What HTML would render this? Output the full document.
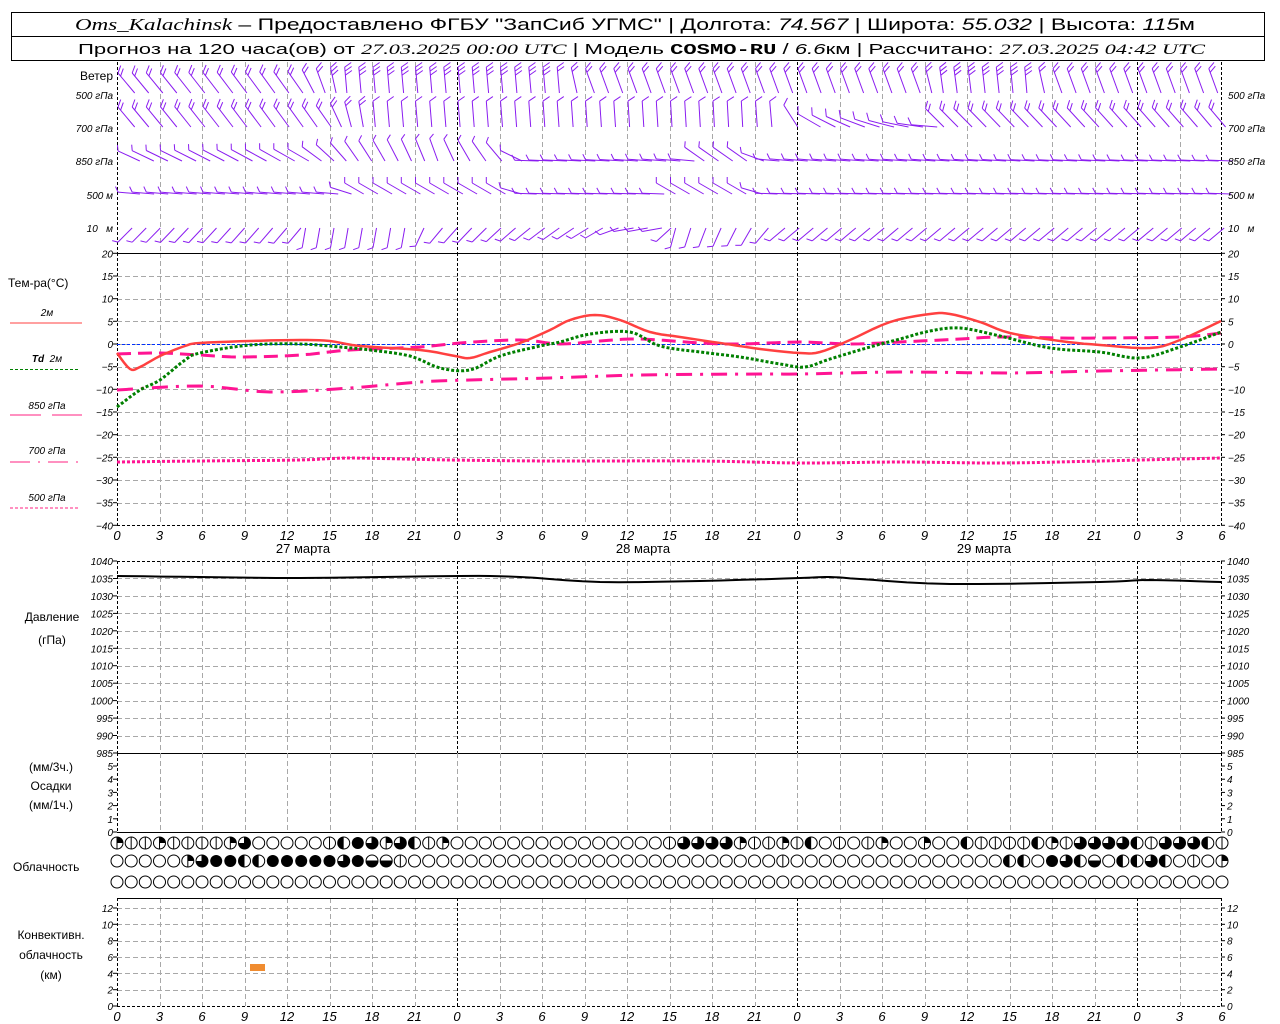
<!DOCTYPE html>
<html><head><meta charset="utf-8"><style>
html,body{margin:0;padding:0;background:#fff;width:1280px;height:1024px;overflow:hidden}
svg{display:block}
text{font-family:"Liberation Sans",sans-serif;fill:#000}
.it{font-style:italic}
.ax{font-size:10px;font-style:italic}
.lb{font-size:12px}
</style></head><body>
<svg id="s" width="1280" height="1024" viewBox="0 0 1280 1024" xmlns="http://www.w3.org/2000/svg">
<rect x="11.5" y="12.5" width="1253" height="48" fill="none" stroke="#000"/>
<line x1="11" y1="36.5" x2="1265" y2="36.5" stroke="#000"/>
<text x="75" y="30" font-size="17" textLength="1120" lengthAdjust="spacingAndGlyphs"><tspan font-family="Liberation Serif" font-style="italic">Oms_Kalachinsk</tspan> – Предоставлено ФГБУ "ЗапСиб УГМС" | Долгота: <tspan font-style="italic">74.567</tspan> | Широта: <tspan font-style="italic">55.032</tspan> | Высота: <tspan font-style="italic">115</tspan>м</text>
<text x="78" y="54" font-size="15" textLength="1127" lengthAdjust="spacingAndGlyphs">Прогноз на 120 часа(ов) от <tspan font-family="Liberation Serif" font-style="italic">27.03.2025 00:00 UTC</tspan> | Модель <tspan font-family="Liberation Mono" font-weight="bold">COSMO-RU</tspan> / <tspan font-style="italic">6.6</tspan>км | Рассчитано: <tspan font-family="Liberation Serif" font-style="italic">27.03.2025 04:42 UTC</tspan></text>

<g id="dyn"></g>

<text x="113" y="80" font-size="12" text-anchor="end">Ветер</text>
<text x="113" y="99" class="ax" text-anchor="end">500 гПа</text>
<text x="113" y="132" class="ax" text-anchor="end">700 гПа</text>
<text x="113" y="165" class="ax" text-anchor="end">850 гПа</text>
<text x="113" y="199" class="ax" text-anchor="end">500 м</text>
<text x="113" y="232" class="ax" text-anchor="end">10&#160;&#160;&#160;м</text>
<text x="1228" y="99" class="ax">500 гПа</text>
<text x="1228" y="132" class="ax">700 гПа</text>
<text x="1228" y="165" class="ax">850 гПа</text>
<text x="1228" y="199" class="ax">500 м</text>
<text x="1228" y="232" class="ax">10&#160;&#160;&#160;м</text>

<text x="8" y="287" class="lb">Тем-ра(°С)</text>
<text x="47" y="316" class="ax" text-anchor="middle">2м</text>
<line x1="10" y1="323" x2="82" y2="323" stroke="#ff4040" stroke-width="1"/>
<text x="47" y="362" class="ax" text-anchor="middle"><tspan font-weight="bold">Td</tspan>&#160;&#160;2м</text>
<line x1="10" y1="369.5" x2="78" y2="369.5" stroke="#008000" stroke-dasharray="3,2"/>
<text x="47" y="409" class="ax" text-anchor="middle">850 гПа</text>
<line x1="10" y1="415" x2="41" y2="415" stroke="#ff2080"/><line x1="52" y1="415" x2="82" y2="415" stroke="#ff2080"/>
<text x="47" y="454" class="ax" text-anchor="middle">700 гПа</text>
<line x1="10" y1="462" x2="78" y2="462" stroke="#ff2080" stroke-dasharray="20,8,2,8"/>
<text x="47" y="501" class="ax" text-anchor="middle">500 гПа</text>
<line x1="10" y1="508" x2="78" y2="508" stroke="#ff2080" stroke-dasharray="3,2"/>

<text x="303" y="553" font-size="13" text-anchor="middle">27 марта</text>
<text x="643" y="553" font-size="13" text-anchor="middle">28 марта</text>
<text x="984" y="553" font-size="13" text-anchor="middle">29 марта</text>

<text x="52" y="621" class="lb" text-anchor="middle">Давление</text>
<text x="52" y="644" class="lb" text-anchor="middle">(гПа)</text>
<text x="51" y="771" class="lb" text-anchor="middle">(мм/3ч.)</text>
<text x="51" y="790" class="lb" text-anchor="middle">Осадки</text>
<text x="51" y="809" class="lb" text-anchor="middle">(мм/1ч.)</text>
<text x="13" y="871" class="lb">Облачность</text>
<text x="51" y="939" class="lb" text-anchor="middle">Конвективн.</text>
<text x="51" y="959" class="lb" text-anchor="middle">облачность</text>
<text x="51" y="979" class="lb" text-anchor="middle">(км)</text>
<rect x="250" y="964" width="15" height="7" fill="#f08c30"/>
<g id="txt"></g>
</svg>
<script>
(function(){
var X0=117,PH=340/24,XR=1221;
function X(h){return X0+h*PH;}
var o=[];
function L(x1,y1,x2,y2,st){o.push('<line x1="'+x1.toFixed(1)+'" y1="'+y1.toFixed(1)+'" x2="'+x2.toFixed(1)+'" y2="'+y2.toFixed(1)+'" '+st+'/>');}
var G='stroke="#a8a8a8" stroke-dasharray="5,3"', D='stroke="#000" stroke-dasharray="3,2"', S='stroke="#000"';
function vgrid(y1,y2,dayBlack){
 for(var h=3;h<78;h+=3){var x=Math.round(X(h))+0.5;
  if(h%24==0&&dayBlack)L(x,y1,x,y2,D);else L(x,y1,x,y2,G);}
 L(X0+0.5,y1,X0+0.5,y2,D);L(XR+0.5,y1,XR+0.5,y2,D);
}
vgrid(62,253,true);
function TY(t){return 344-t*(272/60);}
for(var t=-35;t<=15;t+=5){var y=Math.round(TY(t))+0.5;L(X0,y,XR,y,G);}
vgrid(253,525,true);
L(X0,253.5,XR,253.5,S);L(X0,525.5,XR,525.5,D);
L(X0,344.5,XR,344.5,'stroke="#0030ff" stroke-dasharray="3,2"');
var tx=[];
for(var t=-40;t<=20;t+=5){var y=TY(t);L(X0-4,y,X0,y,S);L(XR,y,XR+4,y,S);
 tx.push('<text x="113" y="'+(y+4).toFixed(1)+'" class="ax" text-anchor="end">'+(t<0?'−'+(-t):t)+'</text>');
 tx.push('<text x="1228" y="'+(y+4).toFixed(1)+'" class="ax">'+(t<0?'−'+(-t):t)+'</text>');}
var hl=[0,3,6,9,12,15,18,21,0,3,6,9,12,15,18,21,0,3,6,9,12,15,18,21,0,3,6];
for(var i=0;i<hl.length;i++){var x=X(i*3);
 tx.push('<text x="'+x.toFixed(1)+'" y="540" font-size="13" class="it" text-anchor="middle">'+hl[i]+'</text>');
 tx.push('<text x="'+x.toFixed(1)+'" y="1021" font-size="13" class="it" text-anchor="middle">'+hl[i]+'</text>');}
function PY(p){return 561+(1040-p)*(192/55);}
for(var p=990;p<=1035;p+=5){var y=Math.round(PY(p))+0.5;L(X0,y,XR,y,G);}
vgrid(561,753,true);
L(X0,561.5,XR,561.5,D);L(X0,753.5,XR,753.5,S);
for(var p=985;p<=1040;p+=5){var y=PY(p);L(X0-4,y,X0,y,S);L(XR,y,XR+4,y,S);
 tx.push('<text x="113" y="'+(y+4).toFixed(1)+'" class="ax" font-size="9" text-anchor="end">'+p+'</text>');
 tx.push('<text x="1227" y="'+(y+4).toFixed(1)+'" class="ax" font-size="9">'+p+'</text>');}
vgrid(753,832,false);L(X0,832.5,XR,832.5,S);
for(var k=0;k<=5;k++){var y=832-k*13.2;L(X0-4,y,X0,y,S);L(XR,y,XR+4,y,S);
 tx.push('<text x="113" y="'+(y+4).toFixed(1)+'" class="ax" font-size="9" text-anchor="end">'+k+'</text>');
 tx.push('<text x="1227" y="'+(y+4).toFixed(1)+'" class="ax" font-size="9">'+k+'</text>');}
function CY(v){return 1006-v*(98/12);}
for(var v=2;v<=12;v+=2){var y=Math.round(CY(v))+0.5;L(X0,y,XR,y,G);}
vgrid(898,1006,true);L(X0,898.5,XR,898.5,S);L(X0,1006.5,XR,1006.5,D);
for(var v=0;v<=12;v+=2){var y=CY(v);L(X0-4,y,X0,y,S);L(XR,y,XR+4,y,S);
 tx.push('<text x="113" y="'+(y+4).toFixed(1)+'" class="ax" font-size="9" text-anchor="end">'+v+'</text>');
 tx.push('<text x="1227" y="'+(y+4).toFixed(1)+'" class="ax" font-size="9">'+v+'</text>');}
function PL(pts,st){o.push('<polyline fill="none" points="'+pts.map(function(p){return p[0]+','+p[1];}).join(' ')+'" '+st+'/>');}
function sm(pts){
 var r=[];for(var i=0;i<pts.length-1;i++){var p0=pts[Math.max(0,i-1)],p1=pts[i],p2=pts[i+1],p3=pts[Math.min(pts.length-1,i+2)];
 for(var t=0;t<1;t+=0.2){var t2=t*t,t3=t2*t;var f=function(a,b,c,d){return 0.5*((2*b)+(-a+c)*t+(2*a-5*b+4*c-d)*t2+(-a+3*b-3*c+d)*t3);};
 r.push([f(p0[0],p1[0],p2[0],p3[0]).toFixed(1),f(p0[1],p1[1],p2[1],p3[1]).toFixed(1)]);}}
 r.push(pts[pts.length-1]);return r;}
PL(sm([[117,462],[200,461],[300,460],[350,458],[450,460],[550,461],[700,461],[800,463],[900,462],[1000,463],[1100,461],[1221,458]]),'stroke="#ff1493" stroke-width="3" stroke-dasharray="3,2"');
PL(sm([[117,390],[200,386],[270,392],[350,388],[420,382],[470,380],[550,378],[640,375],[760,374],[800,374],[900,372],[1010,373],[1100,371],[1221,369]]),'stroke="#ff1493" stroke-width="3" stroke-dasharray="16,8,3,8"');
PL(sm([[117,354],[160,353],[200,355],[240,357],[300,355],[350,350],[420,347],[460,343],[520,340],[560,344],[600,341],[640,339],[700,343],[740,344],[800,342],[850,344],[900,342],[960,339],[1000,337],[1060,338],[1100,338],[1180,337],[1221,333]]),'stroke="#ff1493" stroke-width="3" stroke-dasharray="14,7"');
PL(sm([[117,407],[140,390],[160,380],[185,360],[200,353],[250,345],[300,344],[340,347],[370,350],[410,356],[440,368],[470,370],[500,356],[540,346],[560,342],[590,334],[630,332],[660,346],[700,352],[740,357],[780,364],[805,367],[830,359],[870,347],[900,339],[930,331],[960,328],[1000,336],[1050,348],[1100,352],[1140,358],[1180,347],[1221,332]]),'stroke="#008000" stroke-width="3" stroke-dasharray="3,2"');
PL(sm([[117,353],[130,369],[140,367],[160,356],[185,346],[200,343],[250,341],[300,340],[330,341],[360,346],[420,350],[455,356],[470,358],[490,352],[520,343],[550,330],[570,320],[595,315],[620,320],[650,332],[680,337],[720,343],[760,349],[800,353],[820,352],[850,340],[890,322],[930,314],[950,314],[980,322],[1010,333],[1060,341],[1100,345],[1150,348],[1180,340],[1221,321]]),'stroke="#ff4040" stroke-width="2.5"');
PL(sm([[117,576],[200,577],[300,578],[460,576],[520,577],[600,582],[700,581],[800,578],[830,577],[860,579],[950,584],[1100,582],[1150,580],[1221,582]]),'stroke="#000" stroke-width="2"');
function interp(k,h){for(var i=0;i<k.length-1;i++){if(h<=k[i+1][0]){var a=k[i],b=k[i+1];var f=(h-a[0])/(b[0]-a[0]);return a[1]+(b[1]-a[1])*f;}}return k[k.length-1][1];}
var rows=[
 {y:93,L:26,k:[[0,-40],[12,-35],[14,-20],[16,-5],[31,-5],[33,-20],[56,-20],[58,-8],[64,-5],[66,-20],[78,-20]],f:function(h){return (h>=15&&h<=30)||(h>=58&&h<=64)?3:2;}},
 {y:127,L:26,k:[[0,-40],[14,-35],[16,-15],[18,-5],[44,-3],[46,-5],[48,-60],[56,-85],[57,-45],[78,-40]],f:function(h){return h<18||h>56?2:1;}},
 {y:161,L:24,k:[[0,-65],[12,-60],[16,-35],[22,-20],[26,-40],[28,-88],[39,-85],[40,-55],[43,-55],[45,-85],[78,-88]],f:function(){return 1;}},
 {y:194,L:22,k:[[0,-85],[14,-85],[16,-60],[26,-60],[28,-88],[37,-88],[38,-60],[43,-60],[45,-88],[78,-88]],f:function(){return 1;}},
 {y:228,L:20,k:[[0,-135],[12,-140],[13,-170],[20,-170],[22,-140],[33,-120],[35,-100],[37,-100],[39,-165],[44,-150],[46,-130],[78,-130]],f:function(){return 1;}}
];
var W='stroke="#8a1cf0" stroke-width="1"';
var th=60*Math.PI/180,c=Math.cos(th),s=Math.sin(th);
rows.forEach(function(r,ri){
 for(var h=0;h<=77;h++){
  var ph=interp(r.k,h)*Math.PI/180;
  var dx=Math.sin(ph),dy=-Math.cos(ph);
  var x=X(h)+1-Math.min(0,dx*r.L);
  var by=r.y;
  var tx_=x+dx*r.L,ty_=by+dy*r.L;
  L(x,by,tx_,ty_,W);
  var fx=dx*c-dy*s,fy=dx*s+dy*c;
  var n=r.f(h),fl=ri>=2?6:8;
  for(var j=0;j<n;j++){var px=tx_-dx*j*4,py=ty_-dy*j*4;L(px,py,px+fx*fl,py+fy*fl,W);}
 }
});
var rowsC=[
 "qllqllllqtooooolhftqthlqooooooooooooooolttttqllqlhololqooqoohllllhqltttthlttthlttq".slice(0,79),
 "oooooqtffhhffffftfeeloooooooooooooooooooooooooolooooooooooooooohhoftheohhtholoqlooooo".slice(0,79),
 ""
];
var cy=[843,861,882];
for(var r=0;r<3;r++){for(var h=0;h<79;h++){
 var x=X(h),y=cy[r],R=6,t=rowsC[r][h]||'o';
 var g='';
 if(t=='f')g='<circle cx="'+x.toFixed(1)+'" cy="'+y+'" r="'+R+'" fill="#000"/>';
 else{
  g='<circle cx="'+x.toFixed(1)+'" cy="'+y+'" r="'+R+'" fill="#fff" stroke="#000"/>';
  if(t=='q')g+='<path d="M'+x+' '+y+'V'+(y-R)+'A'+R+' '+R+' 0 0 1 '+(x+R)+' '+y+'Z"/>';
  if(t=='h')g+='<path d="M'+x+' '+(y-R)+'A'+R+' '+R+' 0 0 0 '+x+' '+(y+R)+'Z"/>';
  if(t=='t')g+='<path d="M'+x+' '+y+'H'+(x-R)+'A'+R+' '+R+' 0 1 0 '+x+' '+(y-R)+'Z"/>';
  if(t=='l'||t=='q'||t=='t')g+='<line x1="'+x+'" y1="'+(y-R)+'" x2="'+x+'" y2="'+(y+R)+'" stroke="#000"/>';
  if(t=='e')g+='<path d="M'+(x-R)+' '+y+'A'+R+' '+R+' 0 0 0 '+(x+R)+' '+y+'Z"/><line x1="'+(x-R)+'" y1="'+y+'" x2="'+(x+R)+'" y2="'+y+'" stroke="#000"/>';
 }
 o.push(g);
}}
document.getElementById('dyn').innerHTML=o.join('');
document.getElementById('txt').innerHTML=tx.join('');
})();
</script>
</body></html>
